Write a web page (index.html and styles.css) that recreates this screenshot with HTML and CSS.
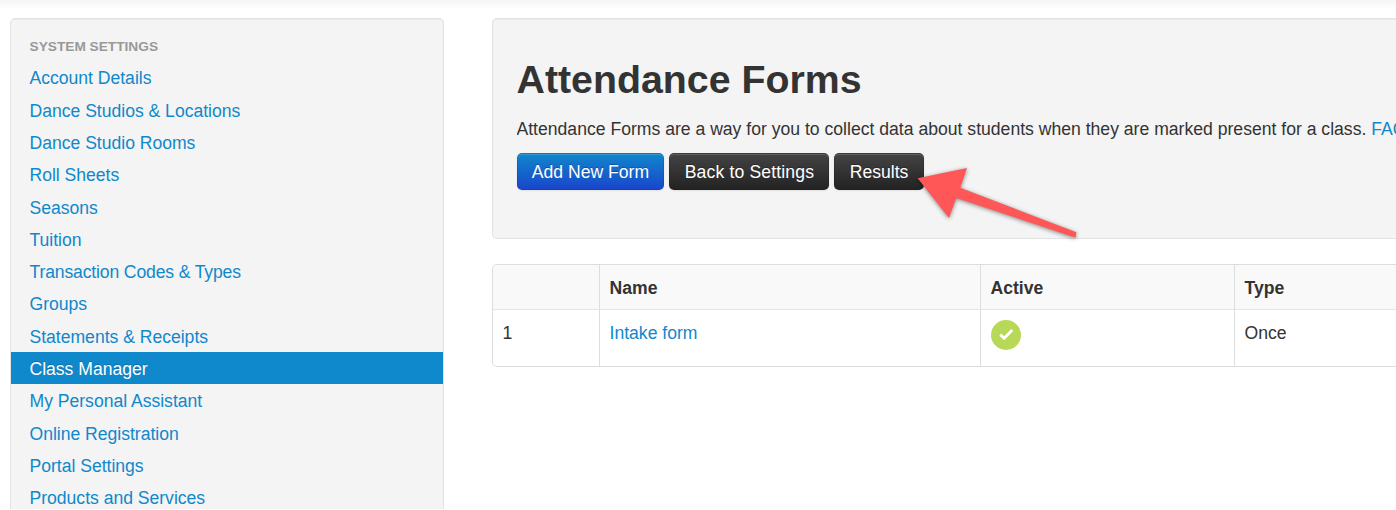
FILE: index.html
```html
<!DOCTYPE html>
<html lang="en">
<head>
  <meta charset="UTF-8">
  <title>Attendance Forms</title>
  <link rel="stylesheet" href="styles.css">
</head>
<body>
  <div class="container">
    <div class="sidebar">
      <ul class="nav-list">
        <li class="nav-header">System Settings</li>
        <li><a href="#">Account Details</a></li>
        <li><a href="#">Dance Studios &amp; Locations</a></li>
        <li><a href="#">Dance Studio Rooms</a></li>
        <li><a href="#">Roll Sheets</a></li>
        <li><a href="#">Seasons</a></li>
        <li><a href="#">Tuition</a></li>
        <li><a href="#" class="tight">Transaction Codes &amp; Types</a></li>
        <li><a href="#">Groups</a></li>
        <li><a href="#">Statements &amp; Receipts</a></li>
        <li class="active"><a href="#">Class Manager</a></li>
        <li><a href="#">My Personal Assistant</a></li>
        <li><a href="#">Online Registration</a></li>
        <li><a href="#">Portal Settings</a></li>
        <li><a href="#">Products and Services</a></li>
      </ul>
    </div>
    <div class="content">
      <div class="well">
        <h1>Attendance Forms</h1>
        <p>Attendance Forms are a way for you to collect data about students when they are marked present for a class. <a href="#">FAQ</a></p>
        <div class="buttons">
          <a href="#" class="btn btn-primary">Add New Form</a>
          <a href="#" class="btn btn-back">Back to Settings</a>
          <a href="#" class="btn">Results</a>
        </div>
        <svg class="arrow" width="180" height="90" viewBox="910 160 180 90">
          <path d="M917.7 178.3 L967 168 L960.3 187.8 L1076.4 232.3 L1075.6 237.7 L956.3 198 L949 218 Z" fill="#ff5757"/>
        </svg>
      </div>
      <table class="table">
        <thead>
          <tr>
            <th class="col-num"></th>
            <th class="col-name">Name</th>
            <th class="col-active">Active</th>
            <th>Type</th>
          </tr>
        </thead>
        <tbody>
          <tr>
            <td>1</td>
            <td><a href="#">Intake form</a></td>
            <td>
              <svg class="check" width="30" height="30" viewBox="0 0 30 30">
                <circle cx="15" cy="15" r="15" fill="#b8d957"/>
                <path d="M9.3 14.6 L13.2 18.2 L21.2 10" fill="none" stroke="#fff" stroke-width="2.8"/>
              </svg>
            </td>
            <td>Once</td>
          </tr>
        </tbody>
      </table>
    </div>
  </div>
</body>
</html>
```

FILE: styles.css
```css
* {
  box-sizing: border-box;
}
body {
  margin: 0;
  height: 510px;
  overflow: hidden;
  font-family: "Liberation Sans", Arial, sans-serif;
  font-size: 17.6px;
  line-height: 24px;
  color: #333;
  background: linear-gradient(#f5f5f5, #fff 10px) #fff;
}
a {
  color: #0f88cc;
  text-decoration: none;
}
.container {
  display: flex;
  align-items: flex-start;
  gap: 48px;
  height: 509px;
  padding: 18px 0 0 10px;
  overflow: hidden;
}
.sidebar {
  flex: 0 0 434px;
  height: 491px;
  padding-top: 11px;
  background: #f4f4f4;
  border: 1px solid #e3e3e3;
  border-bottom: none;
  border-radius: 5px 5px 0 0;
  box-shadow: inset 0 1px 1px rgba(0, 0, 0, 0.05);
}
.nav-list {
  margin: 0;
  padding: 0;
  list-style: none;
}
.nav-header {
  height: 31.2px;
  padding: 0 18.5px;
  font-size: 13.7px;
  line-height: 33px;
  font-weight: bold;
  color: #999;
  text-transform: uppercase;
}
.nav-list a {
  display: block;
  height: 32.33px;
  padding: 0 18.5px;
  line-height: 34px;
  letter-spacing: -0.02px;
}
.nav-list .tight {
  letter-spacing: -0.15px;
}
.nav-list .active a {
  color: #fff;
  background: #0f88cc;
  text-shadow: 0 -1px 0 rgba(0, 0, 0, 0.2);
}
.content {
  flex: 1;
  min-width: 0;
}
.well {
  position: relative;
  height: 221px;
  margin-bottom: 25px;
  padding: 35px 0 35px 23.5px;
  background: #f4f4f4;
  border: 1px solid #e3e3e3;
  border-right: none;
  border-radius: 5px 0 0 5px;
  box-shadow: inset 0 1px 1px rgba(0, 0, 0, 0.05);
}
h1 {
  margin: 0 0 13px;
  font-size: 39.3px;
  line-height: 50px;
}
p {
  margin: 0 0 12px;
  overflow: hidden;
  white-space: nowrap;
}
.buttons {
  display: flex;
  gap: 5px;
}
.btn {
  height: 37px;
  padding: 0 14.3px;
  line-height: 36px;
  color: #fff;
  white-space: nowrap;
  background: linear-gradient(#444, #222) border-box;
  border: 1px solid rgba(0, 0, 0, 0.1);
  border-radius: 5px;
  text-shadow: 0 -1px 0 rgba(0, 0, 0, 0.25);
  box-shadow: inset 0 1px 0 rgba(255, 255, 255, 0.15), 0 1px 2px rgba(0, 0, 0, 0.08);
}
.btn-primary {
  background: linear-gradient(#0f88cc, #1a44cc) border-box;
}
.btn-back {
  letter-spacing: 0.14px;
}
.arrow {
  position: absolute;
  left: 417px;
  top: 141px;
  filter: drop-shadow(0 1px 2px rgba(0, 0, 0, 0.45));
}
.table {
  width: 100%;
  table-layout: fixed;
  border: 1px solid #ddd;
  border-right: none;
  border-radius: 5px 0 0 5px;
  border-collapse: separate;
  border-spacing: 0;
}
th, td {
  padding: 11px 9.5px 9px;
  text-align: left;
  vertical-align: top;
}
th {
  height: 44px;
  background: #f9f9f9;
}
th:first-child {
  border-radius: 4px 0 0 0;
}
td {
  height: 57px;
  border-top: 1px solid #e6e6e6;
}
th + th, td + td {
  border-left: 1px solid #ddd;
}
.col-num {
  width: 106px;
}
.col-name {
  width: 381px;
}
.col-active {
  width: 254px;
}
.check {
  display: block;
  margin-top: -1px;
}
```
